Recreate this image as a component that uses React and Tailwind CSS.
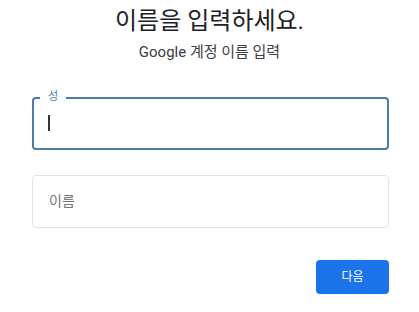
export default function App() {
  const font = { fontFamily: 'Roboto, "Noto Sans CJK KR", "Noto Sans", sans-serif' };
  return (
    <div className="w-[419px] h-[312px] bg-white overflow-hidden" style={font}>
      <div className="pt-[5px] text-center text-[24px] leading-[32px] text-[#202124]">이름을 입력하세요.</div>
      <div className="mt-[6px] text-center text-[15px] leading-[18px] text-[#3c4043]">Google 계정 이름 입력</div>
      <div className="ml-[32px] w-[357px] mt-[36px]">
        <div className="relative h-[53px] rounded-[4px] border-2 border-[#4a7bab]">
          <span className="absolute left-[6px] top-[-10px] bg-white px-[8px] text-[11px] leading-[16px] text-[#4a7bab]">성</span>
          <div className="absolute left-[14px] top-[16px] w-[1.5px] h-[16px] bg-[#333]"></div>
        </div>
        <div className="mt-[25px] h-[53px] rounded-[4px] border border-[#e3e3e3] flex items-center pl-[16px] text-[14px] text-[#757575]">이름</div>
        <div className="mt-[32px] flex justify-end">
          <div className="w-[73px] h-[34px] rounded-[4px] bg-[#1a73e8] flex items-center justify-center text-[12px] text-white">다음</div>
        </div>
      </div>
    </div>
  );
}
